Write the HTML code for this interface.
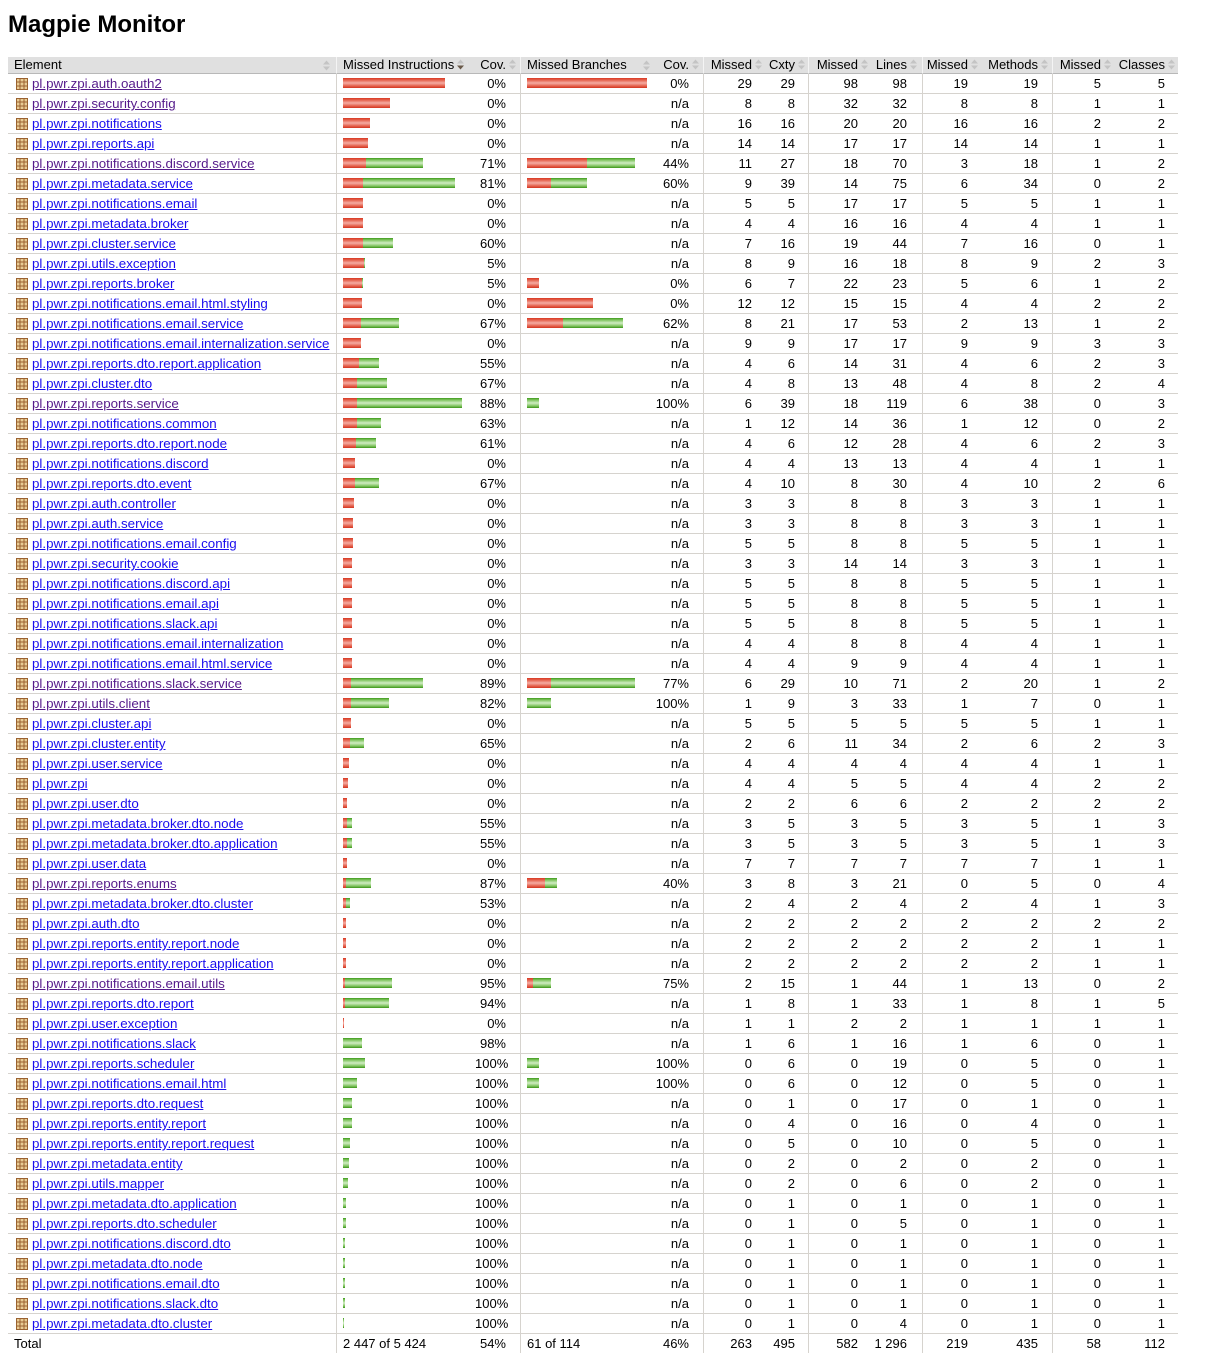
<!DOCTYPE html>
<html><head><meta charset="utf-8">
<style>
html,body{margin:0;padding:0;background:#fff;}
body{font-family:"Liberation Sans",Arial,sans-serif;font-size:13px;color:#000;width:1209px;height:1364px;position:relative;overflow:hidden;}
h1{position:absolute;left:8px;top:11px;margin:0;font-size:24px;font-weight:bold;line-height:28px;}
table{position:absolute;left:8px;top:57px;border-collapse:separate;border-spacing:0;table-layout:fixed;width:1170px;}
th{background:#e0e0e0;font-weight:normal;height:16px;padding:0;line-height:16px;border-bottom:1px solid #b8b8b8;white-space:nowrap;text-align:right;}
td{height:19px;padding:0;line-height:19px;border-bottom:1px solid #d6d3ce;white-space:nowrap;text-align:right;}
tr.t td{border-bottom:none;}
.s{border-left:1px solid #d6d3ce;}
th.s{border-left:1px solid #f4f4f4;}
td.e{text-align:left;padding-left:8px;}
th.e{text-align:left;padding-left:6px;position:relative;}
td.b{text-align:left;padding-left:6px;vertical-align:top;}
tr.t td.b{vertical-align:middle;}
th.b{text-align:left;padding-left:6px;position:relative;}
a{color:#1a0dee;text-decoration:underline;font-size:13.35px;}
a.v{color:#551a8b;}
.ic{display:inline-block;width:12px;height:12px;vertical-align:-2px;margin-right:4px;}
i{display:block;float:left;height:10px;margin-top:4px;}
i.r{background:linear-gradient(#d83a22 0,#e4604c 20%,#f5aca2 50%,#e4604c 80%,#d3341f 100%);}
i.g{background:linear-gradient(#3f9a1c 0,#80c460 20%,#d0ecc2 50%,#80c460 80%,#3b9418 100%);}
.ar{display:inline-block;width:7px;height:11px;margin-left:3px;vertical-align:-1px;}
.pa{position:absolute;top:3px;}
.c1{padding-right:14px}.c2{padding-right:14px}.m1{padding-right:13px}.x1{padding-right:13px}
.m2{padding-right:12px}.l{padding-right:15px}.m3{padding-right:12px}.me{padding-right:14px}
.m4{padding-right:14px}.cl{padding-right:13px}
th.c1,th.c2{padding-right:4px}th.m1,th.x1{padding-right:3px}th.m2{padding-right:2px}th.l{padding-right:5px}
th.m3{padding-right:2px}th.me{padding-right:4px}th.m4{padding-right:4px}th.cl{padding-right:3px}
</style></head><body>
<svg width="0" height="0" style="position:absolute">
<defs>
<symbol id="pk" viewBox="0 0 12 12"><rect x="0.5" y="0.5" width="11" height="11" fill="#e9cc94" stroke="#9a6230"/><path d="M4 1v10M8 1v10M1 4h10M1 8h10" stroke="#9a6230" stroke-width="1"/></symbol>
<symbol id="so" viewBox="0 0 7 11"><path d="M0 4.5L3.5 0.5L7 4.5Z" fill="#c4c4c4"/><path d="M0 6.5L3.5 10.5L7 6.5Z" fill="#c4c4c4"/></symbol>
<symbol id="sd" viewBox="0 0 7 11"><path d="M0 4.5L3.5 0.5L7 4.5Z" fill="#c4c4c4"/><path d="M0 6.5L3.5 10.5L7 6.5Z" fill="#6a5a4a"/></symbol>
</defs></svg>
<h1>Magpie Monitor</h1>
<table>
<colgroup><col style="width:328px"><col style="width:139px"><col style="width:45px"><col style="width:135px"><col style="width:48px"><col style="width:62px"><col style="width:43px"><col style="width:62px"><col style="width:52px"><col style="width:58px"><col style="width:72px"><col style="width:63px"><col style="width:63px"></colgroup>
<thead><tr>
<th class="e">Element<svg class="ar pa" style="right:6px"><use href="#so"/></svg></th>
<th class="b s">Missed Instructions<svg class="ar"><use href="#sd"/></svg></th>
<th class="c1">Cov.<svg class="ar"><use href="#so"/></svg></th>
<th class="b s">Missed Branches<svg class="ar pa" style="right:5px"><use href="#so"/></svg></th>
<th class="c2">Cov.<svg class="ar"><use href="#so"/></svg></th>
<th class="s m1">Missed<svg class="ar"><use href="#so"/></svg></th>
<th class="x1">Cxty<svg class="ar"><use href="#so"/></svg></th>
<th class="s m2">Missed<svg class="ar"><use href="#so"/></svg></th>
<th class="l">Lines<svg class="ar"><use href="#so"/></svg></th>
<th class="s m3">Missed<svg class="ar"><use href="#so"/></svg></th>
<th class="me">Methods<svg class="ar"><use href="#so"/></svg></th>
<th class="s m4">Missed<svg class="ar"><use href="#so"/></svg></th>
<th class="cl">Classes<svg class="ar"><use href="#so"/></svg></th>
</tr></thead>
<tbody>
<tr><td class="e"><svg class="ic"><use href="#pk"/></svg><a class="v">pl.pwr.zpi.auth.oauth2</a></td><td class="b s"><i class="r" style="width:102px"></i></td><td class="c1">0%</td><td class="b s"><i class="r" style="width:120px"></i></td><td class="c2">0%</td><td class="s m1">29</td><td class="x1">29</td><td class="s m2">98</td><td class="l">98</td><td class="s m3">19</td><td class="me">19</td><td class="s m4">5</td><td class="cl">5</td></tr>
<tr><td class="e"><svg class="ic"><use href="#pk"/></svg><a class="v">pl.pwr.zpi.security.config</a></td><td class="b s"><i class="r" style="width:47px"></i></td><td class="c1">0%</td><td class="b s"></td><td class="c2">n/a</td><td class="s m1">8</td><td class="x1">8</td><td class="s m2">32</td><td class="l">32</td><td class="s m3">8</td><td class="me">8</td><td class="s m4">1</td><td class="cl">1</td></tr>
<tr><td class="e"><svg class="ic"><use href="#pk"/></svg><a>pl.pwr.zpi.notifications</a></td><td class="b s"><i class="r" style="width:27px"></i></td><td class="c1">0%</td><td class="b s"></td><td class="c2">n/a</td><td class="s m1">16</td><td class="x1">16</td><td class="s m2">20</td><td class="l">20</td><td class="s m3">16</td><td class="me">16</td><td class="s m4">2</td><td class="cl">2</td></tr>
<tr><td class="e"><svg class="ic"><use href="#pk"/></svg><a>pl.pwr.zpi.reports.api</a></td><td class="b s"><i class="r" style="width:25px"></i></td><td class="c1">0%</td><td class="b s"></td><td class="c2">n/a</td><td class="s m1">14</td><td class="x1">14</td><td class="s m2">17</td><td class="l">17</td><td class="s m3">14</td><td class="me">14</td><td class="s m4">1</td><td class="cl">1</td></tr>
<tr><td class="e"><svg class="ic"><use href="#pk"/></svg><a class="v">pl.pwr.zpi.notifications.discord.service</a></td><td class="b s"><i class="r" style="width:23px"></i><i class="g" style="width:57px"></i></td><td class="c1">71%</td><td class="b s"><i class="r" style="width:60px"></i><i class="g" style="width:48px"></i></td><td class="c2">44%</td><td class="s m1">11</td><td class="x1">27</td><td class="s m2">18</td><td class="l">70</td><td class="s m3">3</td><td class="me">18</td><td class="s m4">1</td><td class="cl">2</td></tr>
<tr><td class="e"><svg class="ic"><use href="#pk"/></svg><a>pl.pwr.zpi.metadata.service</a></td><td class="b s"><i class="r" style="width:20px"></i><i class="g" style="width:92px"></i></td><td class="c1">81%</td><td class="b s"><i class="r" style="width:24px"></i><i class="g" style="width:36px"></i></td><td class="c2">60%</td><td class="s m1">9</td><td class="x1">39</td><td class="s m2">14</td><td class="l">75</td><td class="s m3">6</td><td class="me">34</td><td class="s m4">0</td><td class="cl">2</td></tr>
<tr><td class="e"><svg class="ic"><use href="#pk"/></svg><a>pl.pwr.zpi.notifications.email</a></td><td class="b s"><i class="r" style="width:20px"></i></td><td class="c1">0%</td><td class="b s"></td><td class="c2">n/a</td><td class="s m1">5</td><td class="x1">5</td><td class="s m2">17</td><td class="l">17</td><td class="s m3">5</td><td class="me">5</td><td class="s m4">1</td><td class="cl">1</td></tr>
<tr><td class="e"><svg class="ic"><use href="#pk"/></svg><a>pl.pwr.zpi.metadata.broker</a></td><td class="b s"><i class="r" style="width:20px"></i></td><td class="c1">0%</td><td class="b s"></td><td class="c2">n/a</td><td class="s m1">4</td><td class="x1">4</td><td class="s m2">16</td><td class="l">16</td><td class="s m3">4</td><td class="me">4</td><td class="s m4">1</td><td class="cl">1</td></tr>
<tr><td class="e"><svg class="ic"><use href="#pk"/></svg><a>pl.pwr.zpi.cluster.service</a></td><td class="b s"><i class="r" style="width:20px"></i><i class="g" style="width:30px"></i></td><td class="c1">60%</td><td class="b s"></td><td class="c2">n/a</td><td class="s m1">7</td><td class="x1">16</td><td class="s m2">19</td><td class="l">44</td><td class="s m3">7</td><td class="me">16</td><td class="s m4">0</td><td class="cl">1</td></tr>
<tr><td class="e"><svg class="ic"><use href="#pk"/></svg><a>pl.pwr.zpi.utils.exception</a></td><td class="b s"><i class="r" style="width:21px"></i><i class="g" style="width:1px"></i></td><td class="c1">5%</td><td class="b s"></td><td class="c2">n/a</td><td class="s m1">8</td><td class="x1">9</td><td class="s m2">16</td><td class="l">18</td><td class="s m3">8</td><td class="me">9</td><td class="s m4">2</td><td class="cl">3</td></tr>
<tr><td class="e"><svg class="ic"><use href="#pk"/></svg><a>pl.pwr.zpi.reports.broker</a></td><td class="b s"><i class="r" style="width:19px"></i><i class="g" style="width:1px"></i></td><td class="c1">5%</td><td class="b s"><i class="r" style="width:12px"></i></td><td class="c2">0%</td><td class="s m1">6</td><td class="x1">7</td><td class="s m2">22</td><td class="l">23</td><td class="s m3">5</td><td class="me">6</td><td class="s m4">1</td><td class="cl">2</td></tr>
<tr><td class="e"><svg class="ic"><use href="#pk"/></svg><a>pl.pwr.zpi.notifications.email.html.styling</a></td><td class="b s"><i class="r" style="width:19px"></i></td><td class="c1">0%</td><td class="b s"><i class="r" style="width:66px"></i></td><td class="c2">0%</td><td class="s m1">12</td><td class="x1">12</td><td class="s m2">15</td><td class="l">15</td><td class="s m3">4</td><td class="me">4</td><td class="s m4">2</td><td class="cl">2</td></tr>
<tr><td class="e"><svg class="ic"><use href="#pk"/></svg><a>pl.pwr.zpi.notifications.email.service</a></td><td class="b s"><i class="r" style="width:18px"></i><i class="g" style="width:38px"></i></td><td class="c1">67%</td><td class="b s"><i class="r" style="width:36px"></i><i class="g" style="width:60px"></i></td><td class="c2">62%</td><td class="s m1">8</td><td class="x1">21</td><td class="s m2">17</td><td class="l">53</td><td class="s m3">2</td><td class="me">13</td><td class="s m4">1</td><td class="cl">2</td></tr>
<tr><td class="e"><svg class="ic"><use href="#pk"/></svg><a>pl.pwr.zpi.notifications.email.internalization.service</a></td><td class="b s"><i class="r" style="width:18px"></i></td><td class="c1">0%</td><td class="b s"></td><td class="c2">n/a</td><td class="s m1">9</td><td class="x1">9</td><td class="s m2">17</td><td class="l">17</td><td class="s m3">9</td><td class="me">9</td><td class="s m4">3</td><td class="cl">3</td></tr>
<tr><td class="e"><svg class="ic"><use href="#pk"/></svg><a>pl.pwr.zpi.reports.dto.report.application</a></td><td class="b s"><i class="r" style="width:16px"></i><i class="g" style="width:20px"></i></td><td class="c1">55%</td><td class="b s"></td><td class="c2">n/a</td><td class="s m1">4</td><td class="x1">6</td><td class="s m2">14</td><td class="l">31</td><td class="s m3">4</td><td class="me">6</td><td class="s m4">2</td><td class="cl">3</td></tr>
<tr><td class="e"><svg class="ic"><use href="#pk"/></svg><a>pl.pwr.zpi.cluster.dto</a></td><td class="b s"><i class="r" style="width:14px"></i><i class="g" style="width:30px"></i></td><td class="c1">67%</td><td class="b s"></td><td class="c2">n/a</td><td class="s m1">4</td><td class="x1">8</td><td class="s m2">13</td><td class="l">48</td><td class="s m3">4</td><td class="me">8</td><td class="s m4">2</td><td class="cl">4</td></tr>
<tr><td class="e"><svg class="ic"><use href="#pk"/></svg><a class="v">pl.pwr.zpi.reports.service</a></td><td class="b s"><i class="r" style="width:14px"></i><i class="g" style="width:105px"></i></td><td class="c1">88%</td><td class="b s"><i class="g" style="width:12px"></i></td><td class="c2">100%</td><td class="s m1">6</td><td class="x1">39</td><td class="s m2">18</td><td class="l">119</td><td class="s m3">6</td><td class="me">38</td><td class="s m4">0</td><td class="cl">3</td></tr>
<tr><td class="e"><svg class="ic"><use href="#pk"/></svg><a>pl.pwr.zpi.notifications.common</a></td><td class="b s"><i class="r" style="width:14px"></i><i class="g" style="width:24px"></i></td><td class="c1">63%</td><td class="b s"></td><td class="c2">n/a</td><td class="s m1">1</td><td class="x1">12</td><td class="s m2">14</td><td class="l">36</td><td class="s m3">1</td><td class="me">12</td><td class="s m4">0</td><td class="cl">2</td></tr>
<tr><td class="e"><svg class="ic"><use href="#pk"/></svg><a>pl.pwr.zpi.reports.dto.report.node</a></td><td class="b s"><i class="r" style="width:13px"></i><i class="g" style="width:20px"></i></td><td class="c1">61%</td><td class="b s"></td><td class="c2">n/a</td><td class="s m1">4</td><td class="x1">6</td><td class="s m2">12</td><td class="l">28</td><td class="s m3">4</td><td class="me">6</td><td class="s m4">2</td><td class="cl">3</td></tr>
<tr><td class="e"><svg class="ic"><use href="#pk"/></svg><a>pl.pwr.zpi.notifications.discord</a></td><td class="b s"><i class="r" style="width:12px"></i></td><td class="c1">0%</td><td class="b s"></td><td class="c2">n/a</td><td class="s m1">4</td><td class="x1">4</td><td class="s m2">13</td><td class="l">13</td><td class="s m3">4</td><td class="me">4</td><td class="s m4">1</td><td class="cl">1</td></tr>
<tr><td class="e"><svg class="ic"><use href="#pk"/></svg><a>pl.pwr.zpi.reports.dto.event</a></td><td class="b s"><i class="r" style="width:12px"></i><i class="g" style="width:24px"></i></td><td class="c1">67%</td><td class="b s"></td><td class="c2">n/a</td><td class="s m1">4</td><td class="x1">10</td><td class="s m2">8</td><td class="l">30</td><td class="s m3">4</td><td class="me">10</td><td class="s m4">2</td><td class="cl">6</td></tr>
<tr><td class="e"><svg class="ic"><use href="#pk"/></svg><a>pl.pwr.zpi.auth.controller</a></td><td class="b s"><i class="r" style="width:11px"></i></td><td class="c1">0%</td><td class="b s"></td><td class="c2">n/a</td><td class="s m1">3</td><td class="x1">3</td><td class="s m2">8</td><td class="l">8</td><td class="s m3">3</td><td class="me">3</td><td class="s m4">1</td><td class="cl">1</td></tr>
<tr><td class="e"><svg class="ic"><use href="#pk"/></svg><a>pl.pwr.zpi.auth.service</a></td><td class="b s"><i class="r" style="width:10px"></i></td><td class="c1">0%</td><td class="b s"></td><td class="c2">n/a</td><td class="s m1">3</td><td class="x1">3</td><td class="s m2">8</td><td class="l">8</td><td class="s m3">3</td><td class="me">3</td><td class="s m4">1</td><td class="cl">1</td></tr>
<tr><td class="e"><svg class="ic"><use href="#pk"/></svg><a>pl.pwr.zpi.notifications.email.config</a></td><td class="b s"><i class="r" style="width:10px"></i></td><td class="c1">0%</td><td class="b s"></td><td class="c2">n/a</td><td class="s m1">5</td><td class="x1">5</td><td class="s m2">8</td><td class="l">8</td><td class="s m3">5</td><td class="me">5</td><td class="s m4">1</td><td class="cl">1</td></tr>
<tr><td class="e"><svg class="ic"><use href="#pk"/></svg><a>pl.pwr.zpi.security.cookie</a></td><td class="b s"><i class="r" style="width:9px"></i></td><td class="c1">0%</td><td class="b s"></td><td class="c2">n/a</td><td class="s m1">3</td><td class="x1">3</td><td class="s m2">14</td><td class="l">14</td><td class="s m3">3</td><td class="me">3</td><td class="s m4">1</td><td class="cl">1</td></tr>
<tr><td class="e"><svg class="ic"><use href="#pk"/></svg><a>pl.pwr.zpi.notifications.discord.api</a></td><td class="b s"><i class="r" style="width:9px"></i></td><td class="c1">0%</td><td class="b s"></td><td class="c2">n/a</td><td class="s m1">5</td><td class="x1">5</td><td class="s m2">8</td><td class="l">8</td><td class="s m3">5</td><td class="me">5</td><td class="s m4">1</td><td class="cl">1</td></tr>
<tr><td class="e"><svg class="ic"><use href="#pk"/></svg><a>pl.pwr.zpi.notifications.email.api</a></td><td class="b s"><i class="r" style="width:9px"></i></td><td class="c1">0%</td><td class="b s"></td><td class="c2">n/a</td><td class="s m1">5</td><td class="x1">5</td><td class="s m2">8</td><td class="l">8</td><td class="s m3">5</td><td class="me">5</td><td class="s m4">1</td><td class="cl">1</td></tr>
<tr><td class="e"><svg class="ic"><use href="#pk"/></svg><a>pl.pwr.zpi.notifications.slack.api</a></td><td class="b s"><i class="r" style="width:9px"></i></td><td class="c1">0%</td><td class="b s"></td><td class="c2">n/a</td><td class="s m1">5</td><td class="x1">5</td><td class="s m2">8</td><td class="l">8</td><td class="s m3">5</td><td class="me">5</td><td class="s m4">1</td><td class="cl">1</td></tr>
<tr><td class="e"><svg class="ic"><use href="#pk"/></svg><a>pl.pwr.zpi.notifications.email.internalization</a></td><td class="b s"><i class="r" style="width:9px"></i></td><td class="c1">0%</td><td class="b s"></td><td class="c2">n/a</td><td class="s m1">4</td><td class="x1">4</td><td class="s m2">8</td><td class="l">8</td><td class="s m3">4</td><td class="me">4</td><td class="s m4">1</td><td class="cl">1</td></tr>
<tr><td class="e"><svg class="ic"><use href="#pk"/></svg><a>pl.pwr.zpi.notifications.email.html.service</a></td><td class="b s"><i class="r" style="width:9px"></i></td><td class="c1">0%</td><td class="b s"></td><td class="c2">n/a</td><td class="s m1">4</td><td class="x1">4</td><td class="s m2">9</td><td class="l">9</td><td class="s m3">4</td><td class="me">4</td><td class="s m4">1</td><td class="cl">1</td></tr>
<tr><td class="e"><svg class="ic"><use href="#pk"/></svg><a class="v">pl.pwr.zpi.notifications.slack.service</a></td><td class="b s"><i class="r" style="width:8px"></i><i class="g" style="width:72px"></i></td><td class="c1">89%</td><td class="b s"><i class="r" style="width:24px"></i><i class="g" style="width:84px"></i></td><td class="c2">77%</td><td class="s m1">6</td><td class="x1">29</td><td class="s m2">10</td><td class="l">71</td><td class="s m3">2</td><td class="me">20</td><td class="s m4">1</td><td class="cl">2</td></tr>
<tr><td class="e"><svg class="ic"><use href="#pk"/></svg><a class="v">pl.pwr.zpi.utils.client</a></td><td class="b s"><i class="r" style="width:8px"></i><i class="g" style="width:38px"></i></td><td class="c1">82%</td><td class="b s"><i class="g" style="width:24px"></i></td><td class="c2">100%</td><td class="s m1">1</td><td class="x1">9</td><td class="s m2">3</td><td class="l">33</td><td class="s m3">1</td><td class="me">7</td><td class="s m4">0</td><td class="cl">1</td></tr>
<tr><td class="e"><svg class="ic"><use href="#pk"/></svg><a>pl.pwr.zpi.cluster.api</a></td><td class="b s"><i class="r" style="width:8px"></i></td><td class="c1">0%</td><td class="b s"></td><td class="c2">n/a</td><td class="s m1">5</td><td class="x1">5</td><td class="s m2">5</td><td class="l">5</td><td class="s m3">5</td><td class="me">5</td><td class="s m4">1</td><td class="cl">1</td></tr>
<tr><td class="e"><svg class="ic"><use href="#pk"/></svg><a>pl.pwr.zpi.cluster.entity</a></td><td class="b s"><i class="r" style="width:7px"></i><i class="g" style="width:14px"></i></td><td class="c1">65%</td><td class="b s"></td><td class="c2">n/a</td><td class="s m1">2</td><td class="x1">6</td><td class="s m2">11</td><td class="l">34</td><td class="s m3">2</td><td class="me">6</td><td class="s m4">2</td><td class="cl">3</td></tr>
<tr><td class="e"><svg class="ic"><use href="#pk"/></svg><a>pl.pwr.zpi.user.service</a></td><td class="b s"><i class="r" style="width:6px"></i></td><td class="c1">0%</td><td class="b s"></td><td class="c2">n/a</td><td class="s m1">4</td><td class="x1">4</td><td class="s m2">4</td><td class="l">4</td><td class="s m3">4</td><td class="me">4</td><td class="s m4">1</td><td class="cl">1</td></tr>
<tr><td class="e"><svg class="ic"><use href="#pk"/></svg><a>pl.pwr.zpi</a></td><td class="b s"><i class="r" style="width:5px"></i></td><td class="c1">0%</td><td class="b s"></td><td class="c2">n/a</td><td class="s m1">4</td><td class="x1">4</td><td class="s m2">5</td><td class="l">5</td><td class="s m3">4</td><td class="me">4</td><td class="s m4">2</td><td class="cl">2</td></tr>
<tr><td class="e"><svg class="ic"><use href="#pk"/></svg><a>pl.pwr.zpi.user.dto</a></td><td class="b s"><i class="r" style="width:4px"></i></td><td class="c1">0%</td><td class="b s"></td><td class="c2">n/a</td><td class="s m1">2</td><td class="x1">2</td><td class="s m2">6</td><td class="l">6</td><td class="s m3">2</td><td class="me">2</td><td class="s m4">2</td><td class="cl">2</td></tr>
<tr><td class="e"><svg class="ic"><use href="#pk"/></svg><a>pl.pwr.zpi.metadata.broker.dto.node</a></td><td class="b s"><i class="r" style="width:4px"></i><i class="g" style="width:5px"></i></td><td class="c1">55%</td><td class="b s"></td><td class="c2">n/a</td><td class="s m1">3</td><td class="x1">5</td><td class="s m2">3</td><td class="l">5</td><td class="s m3">3</td><td class="me">5</td><td class="s m4">1</td><td class="cl">3</td></tr>
<tr><td class="e"><svg class="ic"><use href="#pk"/></svg><a>pl.pwr.zpi.metadata.broker.dto.application</a></td><td class="b s"><i class="r" style="width:4px"></i><i class="g" style="width:5px"></i></td><td class="c1">55%</td><td class="b s"></td><td class="c2">n/a</td><td class="s m1">3</td><td class="x1">5</td><td class="s m2">3</td><td class="l">5</td><td class="s m3">3</td><td class="me">5</td><td class="s m4">1</td><td class="cl">3</td></tr>
<tr><td class="e"><svg class="ic"><use href="#pk"/></svg><a>pl.pwr.zpi.user.data</a></td><td class="b s"><i class="r" style="width:4px"></i></td><td class="c1">0%</td><td class="b s"></td><td class="c2">n/a</td><td class="s m1">7</td><td class="x1">7</td><td class="s m2">7</td><td class="l">7</td><td class="s m3">7</td><td class="me">7</td><td class="s m4">1</td><td class="cl">1</td></tr>
<tr><td class="e"><svg class="ic"><use href="#pk"/></svg><a class="v">pl.pwr.zpi.reports.enums</a></td><td class="b s"><i class="r" style="width:3px"></i><i class="g" style="width:25px"></i></td><td class="c1">87%</td><td class="b s"><i class="r" style="width:18px"></i><i class="g" style="width:12px"></i></td><td class="c2">40%</td><td class="s m1">3</td><td class="x1">8</td><td class="s m2">3</td><td class="l">21</td><td class="s m3">0</td><td class="me">5</td><td class="s m4">0</td><td class="cl">4</td></tr>
<tr><td class="e"><svg class="ic"><use href="#pk"/></svg><a>pl.pwr.zpi.metadata.broker.dto.cluster</a></td><td class="b s"><i class="r" style="width:3px"></i><i class="g" style="width:4px"></i></td><td class="c1">53%</td><td class="b s"></td><td class="c2">n/a</td><td class="s m1">2</td><td class="x1">4</td><td class="s m2">2</td><td class="l">4</td><td class="s m3">2</td><td class="me">4</td><td class="s m4">1</td><td class="cl">3</td></tr>
<tr><td class="e"><svg class="ic"><use href="#pk"/></svg><a>pl.pwr.zpi.auth.dto</a></td><td class="b s"><i class="r" style="width:3px"></i></td><td class="c1">0%</td><td class="b s"></td><td class="c2">n/a</td><td class="s m1">2</td><td class="x1">2</td><td class="s m2">2</td><td class="l">2</td><td class="s m3">2</td><td class="me">2</td><td class="s m4">2</td><td class="cl">2</td></tr>
<tr><td class="e"><svg class="ic"><use href="#pk"/></svg><a>pl.pwr.zpi.reports.entity.report.node</a></td><td class="b s"><i class="r" style="width:3px"></i></td><td class="c1">0%</td><td class="b s"></td><td class="c2">n/a</td><td class="s m1">2</td><td class="x1">2</td><td class="s m2">2</td><td class="l">2</td><td class="s m3">2</td><td class="me">2</td><td class="s m4">1</td><td class="cl">1</td></tr>
<tr><td class="e"><svg class="ic"><use href="#pk"/></svg><a>pl.pwr.zpi.reports.entity.report.application</a></td><td class="b s"><i class="r" style="width:3px"></i></td><td class="c1">0%</td><td class="b s"></td><td class="c2">n/a</td><td class="s m1">2</td><td class="x1">2</td><td class="s m2">2</td><td class="l">2</td><td class="s m3">2</td><td class="me">2</td><td class="s m4">1</td><td class="cl">1</td></tr>
<tr><td class="e"><svg class="ic"><use href="#pk"/></svg><a class="v">pl.pwr.zpi.notifications.email.utils</a></td><td class="b s"><i class="r" style="width:2px"></i><i class="g" style="width:47px"></i></td><td class="c1">95%</td><td class="b s"><i class="r" style="width:6px"></i><i class="g" style="width:18px"></i></td><td class="c2">75%</td><td class="s m1">2</td><td class="x1">15</td><td class="s m2">1</td><td class="l">44</td><td class="s m3">1</td><td class="me">13</td><td class="s m4">0</td><td class="cl">2</td></tr>
<tr><td class="e"><svg class="ic"><use href="#pk"/></svg><a>pl.pwr.zpi.reports.dto.report</a></td><td class="b s"><i class="r" style="width:2px"></i><i class="g" style="width:44px"></i></td><td class="c1">94%</td><td class="b s"></td><td class="c2">n/a</td><td class="s m1">1</td><td class="x1">8</td><td class="s m2">1</td><td class="l">33</td><td class="s m3">1</td><td class="me">8</td><td class="s m4">1</td><td class="cl">5</td></tr>
<tr><td class="e"><svg class="ic"><use href="#pk"/></svg><a>pl.pwr.zpi.user.exception</a></td><td class="b s"><i class="r" style="width:1px"></i></td><td class="c1">0%</td><td class="b s"></td><td class="c2">n/a</td><td class="s m1">1</td><td class="x1">1</td><td class="s m2">2</td><td class="l">2</td><td class="s m3">1</td><td class="me">1</td><td class="s m4">1</td><td class="cl">1</td></tr>
<tr><td class="e"><svg class="ic"><use href="#pk"/></svg><a>pl.pwr.zpi.notifications.slack</a></td><td class="b s"><i class="g" style="width:19px"></i></td><td class="c1">98%</td><td class="b s"></td><td class="c2">n/a</td><td class="s m1">1</td><td class="x1">6</td><td class="s m2">1</td><td class="l">16</td><td class="s m3">1</td><td class="me">6</td><td class="s m4">0</td><td class="cl">1</td></tr>
<tr><td class="e"><svg class="ic"><use href="#pk"/></svg><a>pl.pwr.zpi.reports.scheduler</a></td><td class="b s"><i class="g" style="width:22px"></i></td><td class="c1">100%</td><td class="b s"><i class="g" style="width:12px"></i></td><td class="c2">100%</td><td class="s m1">0</td><td class="x1">6</td><td class="s m2">0</td><td class="l">19</td><td class="s m3">0</td><td class="me">5</td><td class="s m4">0</td><td class="cl">1</td></tr>
<tr><td class="e"><svg class="ic"><use href="#pk"/></svg><a>pl.pwr.zpi.notifications.email.html</a></td><td class="b s"><i class="g" style="width:14px"></i></td><td class="c1">100%</td><td class="b s"><i class="g" style="width:12px"></i></td><td class="c2">100%</td><td class="s m1">0</td><td class="x1">6</td><td class="s m2">0</td><td class="l">12</td><td class="s m3">0</td><td class="me">5</td><td class="s m4">0</td><td class="cl">1</td></tr>
<tr><td class="e"><svg class="ic"><use href="#pk"/></svg><a>pl.pwr.zpi.reports.dto.request</a></td><td class="b s"><i class="g" style="width:9px"></i></td><td class="c1">100%</td><td class="b s"></td><td class="c2">n/a</td><td class="s m1">0</td><td class="x1">1</td><td class="s m2">0</td><td class="l">17</td><td class="s m3">0</td><td class="me">1</td><td class="s m4">0</td><td class="cl">1</td></tr>
<tr><td class="e"><svg class="ic"><use href="#pk"/></svg><a>pl.pwr.zpi.reports.entity.report</a></td><td class="b s"><i class="g" style="width:9px"></i></td><td class="c1">100%</td><td class="b s"></td><td class="c2">n/a</td><td class="s m1">0</td><td class="x1">4</td><td class="s m2">0</td><td class="l">16</td><td class="s m3">0</td><td class="me">4</td><td class="s m4">0</td><td class="cl">1</td></tr>
<tr><td class="e"><svg class="ic"><use href="#pk"/></svg><a>pl.pwr.zpi.reports.entity.report.request</a></td><td class="b s"><i class="g" style="width:7px"></i></td><td class="c1">100%</td><td class="b s"></td><td class="c2">n/a</td><td class="s m1">0</td><td class="x1">5</td><td class="s m2">0</td><td class="l">10</td><td class="s m3">0</td><td class="me">5</td><td class="s m4">0</td><td class="cl">1</td></tr>
<tr><td class="e"><svg class="ic"><use href="#pk"/></svg><a>pl.pwr.zpi.metadata.entity</a></td><td class="b s"><i class="g" style="width:6px"></i></td><td class="c1">100%</td><td class="b s"></td><td class="c2">n/a</td><td class="s m1">0</td><td class="x1">2</td><td class="s m2">0</td><td class="l">2</td><td class="s m3">0</td><td class="me">2</td><td class="s m4">0</td><td class="cl">1</td></tr>
<tr><td class="e"><svg class="ic"><use href="#pk"/></svg><a>pl.pwr.zpi.utils.mapper</a></td><td class="b s"><i class="g" style="width:5px"></i></td><td class="c1">100%</td><td class="b s"></td><td class="c2">n/a</td><td class="s m1">0</td><td class="x1">2</td><td class="s m2">0</td><td class="l">6</td><td class="s m3">0</td><td class="me">2</td><td class="s m4">0</td><td class="cl">1</td></tr>
<tr><td class="e"><svg class="ic"><use href="#pk"/></svg><a>pl.pwr.zpi.metadata.dto.application</a></td><td class="b s"><i class="g" style="width:3px"></i></td><td class="c1">100%</td><td class="b s"></td><td class="c2">n/a</td><td class="s m1">0</td><td class="x1">1</td><td class="s m2">0</td><td class="l">1</td><td class="s m3">0</td><td class="me">1</td><td class="s m4">0</td><td class="cl">1</td></tr>
<tr><td class="e"><svg class="ic"><use href="#pk"/></svg><a>pl.pwr.zpi.reports.dto.scheduler</a></td><td class="b s"><i class="g" style="width:3px"></i></td><td class="c1">100%</td><td class="b s"></td><td class="c2">n/a</td><td class="s m1">0</td><td class="x1">1</td><td class="s m2">0</td><td class="l">5</td><td class="s m3">0</td><td class="me">1</td><td class="s m4">0</td><td class="cl">1</td></tr>
<tr><td class="e"><svg class="ic"><use href="#pk"/></svg><a>pl.pwr.zpi.notifications.discord.dto</a></td><td class="b s"><i class="g" style="width:2px"></i></td><td class="c1">100%</td><td class="b s"></td><td class="c2">n/a</td><td class="s m1">0</td><td class="x1">1</td><td class="s m2">0</td><td class="l">1</td><td class="s m3">0</td><td class="me">1</td><td class="s m4">0</td><td class="cl">1</td></tr>
<tr><td class="e"><svg class="ic"><use href="#pk"/></svg><a>pl.pwr.zpi.metadata.dto.node</a></td><td class="b s"><i class="g" style="width:2px"></i></td><td class="c1">100%</td><td class="b s"></td><td class="c2">n/a</td><td class="s m1">0</td><td class="x1">1</td><td class="s m2">0</td><td class="l">1</td><td class="s m3">0</td><td class="me">1</td><td class="s m4">0</td><td class="cl">1</td></tr>
<tr><td class="e"><svg class="ic"><use href="#pk"/></svg><a>pl.pwr.zpi.notifications.email.dto</a></td><td class="b s"><i class="g" style="width:2px"></i></td><td class="c1">100%</td><td class="b s"></td><td class="c2">n/a</td><td class="s m1">0</td><td class="x1">1</td><td class="s m2">0</td><td class="l">1</td><td class="s m3">0</td><td class="me">1</td><td class="s m4">0</td><td class="cl">1</td></tr>
<tr><td class="e"><svg class="ic"><use href="#pk"/></svg><a>pl.pwr.zpi.notifications.slack.dto</a></td><td class="b s"><i class="g" style="width:2px"></i></td><td class="c1">100%</td><td class="b s"></td><td class="c2">n/a</td><td class="s m1">0</td><td class="x1">1</td><td class="s m2">0</td><td class="l">1</td><td class="s m3">0</td><td class="me">1</td><td class="s m4">0</td><td class="cl">1</td></tr>
<tr><td class="e"><svg class="ic"><use href="#pk"/></svg><a>pl.pwr.zpi.metadata.dto.cluster</a></td><td class="b s"><i class="g" style="width:1px"></i></td><td class="c1">100%</td><td class="b s"></td><td class="c2">n/a</td><td class="s m1">0</td><td class="x1">1</td><td class="s m2">0</td><td class="l">4</td><td class="s m3">0</td><td class="me">1</td><td class="s m4">0</td><td class="cl">1</td></tr>
<tr class="t"><td class="e" style="padding-left:6px">Total</td><td class="b s">2 447 of 5 424</td><td class="c1">54%</td><td class="b s">61 of 114</td><td class="c2">46%</td><td class="s m1">263</td><td class="x1">495</td><td class="s m2">582</td><td class="l">1 296</td><td class="s m3">219</td><td class="me">435</td><td class="s m4">58</td><td class="cl">112</td></tr>
</tbody></table>
</body></html>
